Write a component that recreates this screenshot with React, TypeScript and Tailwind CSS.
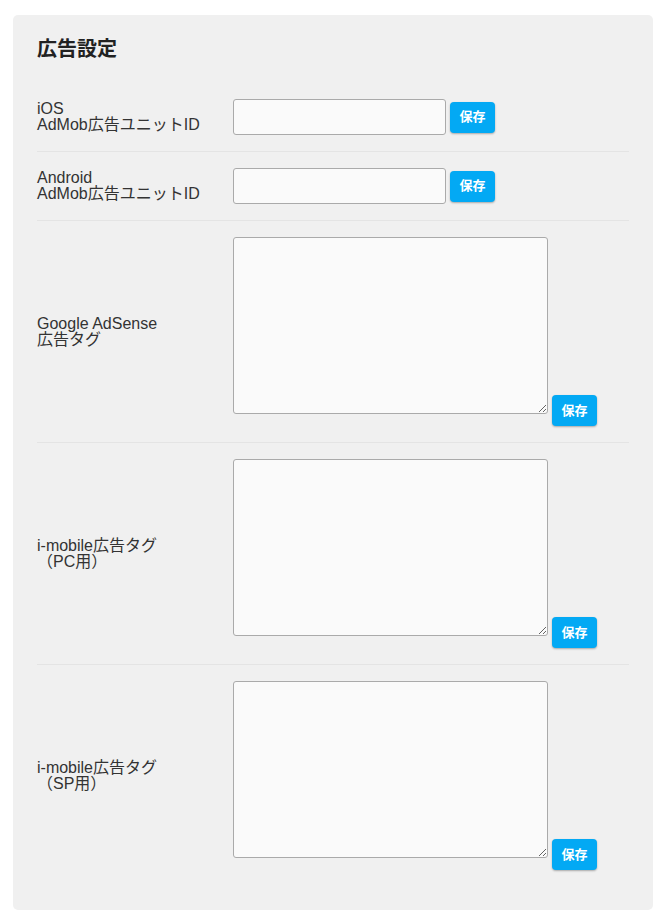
import React from "react";

const font = { fontFamily: '"Liberation Sans", "Noto Sans CJK JP", sans-serif' };

function SaveButton({ className = "" }: { className?: string }) {
  return (
    <button
      className={`w-[45px] h-[31px] rounded-[4px] bg-[#03a9f4] text-white text-[13px] font-bold shadow-[0_1px_2px_rgba(0,0,0,0.3)] shrink-0 ${className}`}
    >
      保存
    </button>
  );
}

function InputRow({ lines, last = false }: { lines: string[]; last?: boolean }) {
  return (
    <div className={`flex items-center py-4 ${last ? "" : "border-b border-[#e4e4e4]"}`}>
      <div className="w-[196px] shrink-0 text-[16px] leading-[16px] text-[#333]">
        {lines.map((l, i) => (
          <div key={i}>{l}</div>
        ))}
      </div>
      <div className="flex items-center gap-[4px]">
        <input
          type="text"
          className="w-[213px] h-[36px] rounded-[3px] border border-[#aaa] bg-[#fafafa] outline-none"
        />
        <SaveButton />
      </div>
    </div>
  );
}

function TextareaRow({ lines, last = false }: { lines: string[]; last?: boolean }) {
  return (
    <div className={`flex items-center py-4 ${last ? "" : "border-b border-[#e4e4e4]"}`}>
      <div className="w-[196px] shrink-0 text-[16px] leading-[16px] text-[#333]">
        {lines.map((l, i) => (
          <div key={i}>{l}</div>
        ))}
      </div>
      <div className="flex items-end gap-[4px]">
        <textarea className="block w-[315px] h-[177px] mb-[12px] rounded-[3px] border border-[#aaa] bg-[#fafafa] outline-none" />
        <SaveButton />
      </div>
    </div>
  );
}

export default function App() {
  return (
    <div className="bg-white min-h-[923px] pt-[15px] pl-[13px]" style={font}>
      <div className="w-[640px] rounded-[5px] bg-[#f0f0f0] px-6 pt-[19px] pb-6">
        <h2 className="text-[20px] leading-[30px] font-bold text-[#222] mb-[19px]">広告設定</h2>
        <InputRow lines={["iOS", "AdMob広告ユニットID"]} />
        <InputRow lines={["Android", "AdMob広告ユニットID"]} />
        <TextareaRow lines={["Google AdSense", "広告タグ"]} />
        <TextareaRow lines={["i-mobile広告タグ", "（PC用）"]} />
        <TextareaRow lines={["i-mobile広告タグ", "（SP用）"]} last />
      </div>
    </div>
  );
}
